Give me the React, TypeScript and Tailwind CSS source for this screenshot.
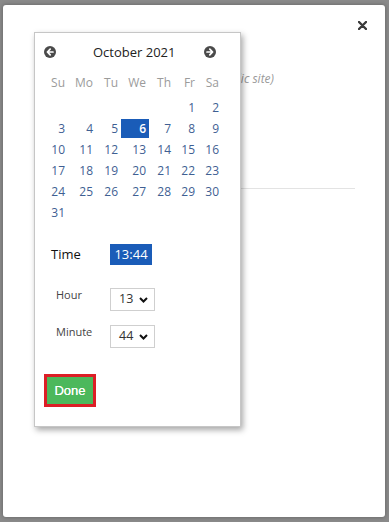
import React from "react";

const WEEKDAYS = ["Su", "Mo", "Tu", "We", "Th", "Fr", "Sa"];

// October 2021 starts on a Friday
const WEEKS: (number | null)[][] = [
    [null, null, null, null, null, 1, 2],
    [3, 4, 5, 6, 7, 8, 9],
    [10, 11, 12, 13, 14, 15, 16],
    [17, 18, 19, 20, 21, 22, 23],
    [24, 25, 26, 27, 28, 29, 30],
    [31, null, null, null, null, null, null],
];

const GRID = "grid grid-cols-[28px_28px_25px_28px_25px_24px_24px]";

function CircleArrow({ dir }: { dir: "left" | "right" }) {
    return (
        <svg width="12" height="12" viewBox="0 0 12 12">
            <circle cx="6" cy="6" r="6" fill="#4a4a4a" />
            {dir === "left" ? (
                <path d="M6.2 3.2 L3.4 6 L6.2 8.8 M3.6 6 H9" stroke="#fff" strokeWidth="1.7" fill="none" strokeLinecap="round" strokeLinejoin="round" />
            ) : (
                <path d="M5.8 3.2 L8.6 6 L5.8 8.8 M8.4 6 H3" stroke="#fff" strokeWidth="1.7" fill="none" strokeLinecap="round" strokeLinejoin="round" />
            )}
        </svg>
    );
}

function FakeSelect({ value }: { value: string }) {
    return (
        <div className="w-[45px] h-[23px] border border-[#cfcfcf] bg-white flex items-center pl-[8px] pr-[6px]">
            <span className="text-[12.5px] text-[#333] font-['Open_Sans',sans-serif] leading-none">{value}</span>
            <svg className="ml-auto" width="9" height="6" viewBox="0 0 9 6">
                <path d="M1 1 L4.5 4.5 L8 1" stroke="#111" strokeWidth="2" fill="none" />
            </svg>
        </div>
    );
}

function DatePicker() {
    return (
        <div className="absolute left-[31px] top-[27px] w-[207px] h-[395px] bg-white border border-[#c6c6c6] shadow-[2px_3px_6px_rgba(0,0,0,0.35)] pt-[11px] font-['Open_Sans',sans-serif]">
            {/* Header */}
            <div className="flex items-center h-[16px] pl-[9px] pr-[24px]">
                <CircleArrow dir="left" />
                <span className="ml-[37px] text-[13px] text-[#222] leading-none">October 2021</span>
                <span className="ml-auto">
                    <CircleArrow dir="right" />
                </span>
            </div>

            {/* Weekdays */}
            <div className={GRID + " mt-[12px] pl-[5px]"}>
                {WEEKDAYS.map((d) => (
                    <div key={d} className="h-[21px] flex items-center justify-end pr-[3px] text-[12px] text-[#9b9b9b]">
                        {d}
                    </div>
                ))}
            </div>

            {/* Days */}
            <div className="mt-[4px] pl-[5px]">
                {WEEKS.map((week, i) => (
                    <div key={i} className={GRID}>
                        {week.map((day, j) => (
                            <div key={j} className="h-[21px] flex items-center">
                                {day !== null && (
                                    <span
                                        className={
                                            day === 6
                                                ? "w-full h-[19px] flex items-center justify-end pr-[3px] text-[12px] font-semibold text-white bg-[#1a5cb8]"
                                                : "w-full h-[19px] flex items-center justify-end pr-[3px] text-[12px] text-[#3f5f93]"
                                        }
                                    >
                                        {day}
                                    </span>
                                )}
                            </div>
                        ))}
                    </div>
                ))}
            </div>

            {/* Time */}
            <div className="mt-[21px] flex items-center h-[21px] pl-[16px]">
                <span className="w-[59px] text-[13px] font-medium text-[#111] leading-none">Time</span>
                <span className="w-[42px] h-[21px] flex items-center justify-center bg-[#1a5cb8] text-white text-[13px]">
                    13:44
                </span>
            </div>

            <div className="mt-[23px] flex items-start pl-[21px]">
                <span className="w-[54px] text-[11px] leading-[14px] text-[#444]">Hour</span>
                <FakeSelect value="13" />
            </div>

            <div className="mt-[14px] flex items-start pl-[21px]">
                <span className="w-[54px] text-[11px] leading-[14px] text-[#444]">Minute</span>
                <FakeSelect value="44" />
            </div>

            <div className="mt-[26px] pl-[9px]">
                <div className="inline-flex border-[3px] border-[#dc1e26]">
                    <button className="w-[46px] h-[27px] bg-[#4cb85c] text-white text-[13px] font-['Liberation_Sans',Arial,sans-serif] flex items-center justify-center [text-shadow:0_0_0.4px_#fff]">
                        Done
                    </button>
                </div>
            </div>
        </div>
    );
}

export default function App() {
    return (
        <div className="w-[389px] h-[522px] bg-[#8a8a8a] pt-[5px] pl-[3px] overflow-hidden">
            <div className="relative w-[382px] h-[512px] bg-white rounded-[3px] shadow-[0_0_4px_rgba(0,0,0,0.3)]">
                {/* Close */}
                <div className="flex justify-end pt-[16px] pr-[18px]">
                    <svg width="9" height="9" viewBox="0 0 9 9">
                        <path d="M1 1 L8 8 M8 1 L1 8" stroke="#3a3a3a" strokeWidth="2.4" strokeLinecap="round" />
                    </svg>
                </div>

                {/* Form content behind the picker, only its tail shows */}
                <div className="mt-[41px] ml-[237px] w-[34px] overflow-hidden flex justify-end">
                    <span className="whitespace-nowrap text-[12px] italic text-[#9a9a9a] font-['Open_Sans',sans-serif] leading-[16px]">
                        (public site)
                    </span>
                </div>
                <div className="mt-[101px] ml-[120px] mr-[30px] h-px bg-[#e3e3e3]" />

                <DatePicker />
            </div>
        </div>
    );
}
